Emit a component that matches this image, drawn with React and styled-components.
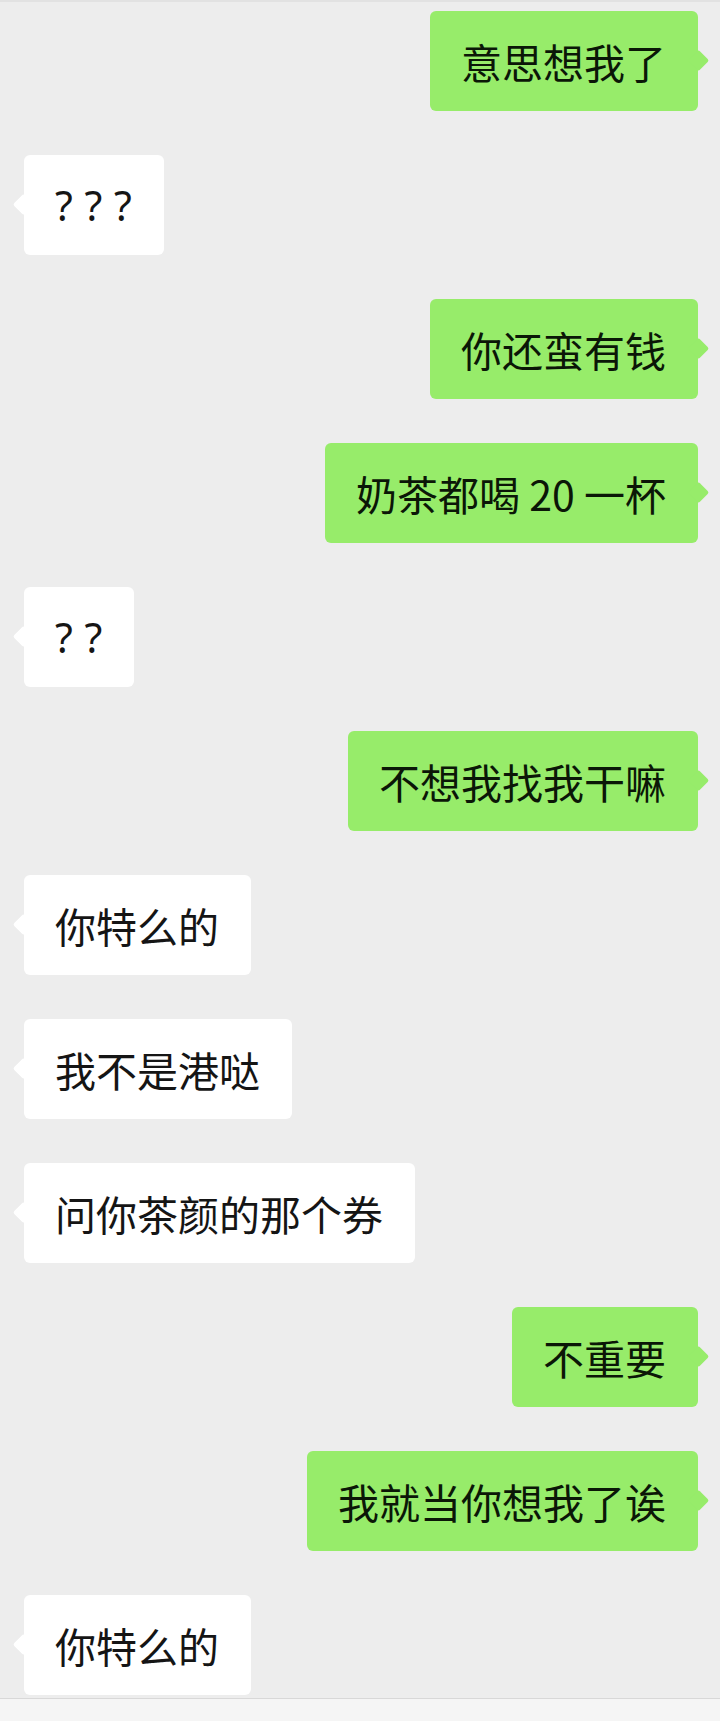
import React from 'react';
import styled, {createGlobalStyle, css} from 'styled-components';

const GlobalStyle = createGlobalStyle`
  html, body {
    margin: 0;
    padding: 0;
    background: #ededed;
  }
  body {
    font-family: "Noto Sans CJK SC", "Noto Sans", sans-serif;
  }
`;

const Screen = styled.div`
  width: 720px;
  height: 1721px;
  display: flex;
  flex-direction: column;
  background: #ededed;
  border-top: 2px solid #e2e2e2;
  box-sizing: border-box;
  overflow: hidden;
`;

const MessageList = styled.div`
  flex: 1;
  display: flex;
  flex-direction: column;
  gap: 44px;
  padding: 9px 22px 0 24px;
`;

const Row = styled.div`
  display: flex;
  justify-content: ${props => props.$side === 'right' ? 'flex-end' : 'flex-start'};
`;

const greenBubble = css`
  background: #97ec6a;
  color: #0b1707;
  &::before {
    right: -8px;
    background: #97ec6a;
  }
`;

const whiteBubble = css`
  background: #ffffff;
  color: #151515;
  &::before {
    left: -8px;
    background: #ffffff;
  }
`;

const Bubble = styled.div`
  position: relative;
  height: 100px;
  display: flex;
  align-items: center;
  padding: 0 32px 0 31px;
  border-radius: 6px;
  font-size: 41px;
  line-height: 1;
  white-space: pre;
  &::before {
    content: '';
    position: absolute;
    top: 50%;
    width: 15px;
    height: 15px;
    margin-top: -8px;
    border-radius: 2px;
    transform: rotate(45deg);
  }
  ${props => props.$side === 'right' ? greenBubble : whiteBubble}
`;

const Marks = styled.span`
  font-family: "Noto Sans", sans-serif;
  word-spacing: 1px;
`;

const InputBar = styled.div`
  height: 22px;
  flex-shrink: 0;
  background: #f5f5f5;
  border-top: 1px solid #d8d8d8;
`;

const messages = [
    {side: 'right', text: '意思想我了'},
    {side: 'left', text: '? ? ?', latin: true},
    {side: 'right', text: '你还蛮有钱'},
    {side: 'right', text: '奶茶都喝 20 一杯'},
    {side: 'left', text: '? ?', latin: true},
    {side: 'right', text: '不想我找我干嘛'},
    {side: 'left', text: '你特么的'},
    {side: 'left', text: '我不是港哒'},
    {side: 'left', text: '问你茶颜的那个券'},
    {side: 'right', text: '不重要'},
    {side: 'right', text: '我就当你想我了诶'},
    {side: 'left', text: '你特么的'},
];

const App = () => {
    return (
        <>
            <GlobalStyle/>
            <Screen>
                <MessageList>
                    {messages.map((m, i) => (
                        <Row key={i} $side={m.side}>
                            <Bubble $side={m.side}>
                                {m.latin ? <Marks>{m.text}</Marks> : m.text}
                            </Bubble>
                        </Row>
                    ))}
                </MessageList>
                <InputBar/>
            </Screen>
        </>
    );
};

export default App;
